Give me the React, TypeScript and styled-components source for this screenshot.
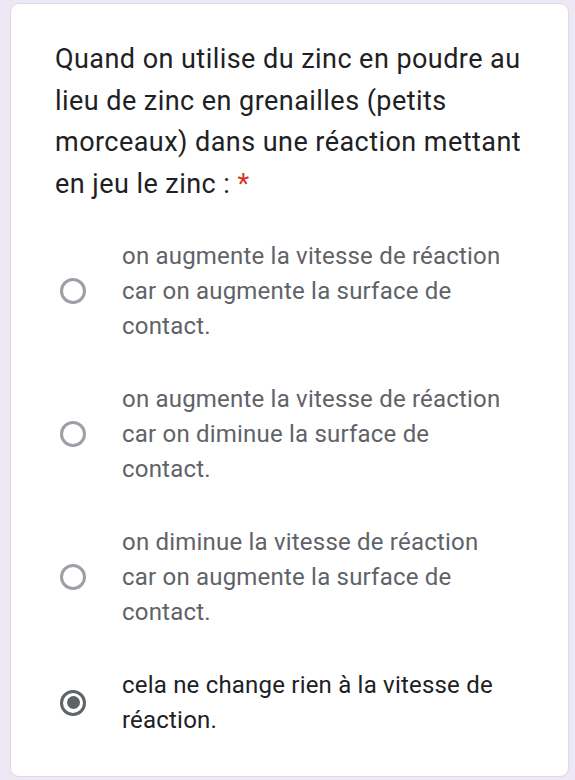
import React from "react";
import styled, { createGlobalStyle } from "styled-components";

const Global = createGlobalStyle`
  html, body {
    margin: 0;
    padding: 0;
    background: #ede7f6;
  }
  body {
    font-family: Roboto, "Liberation Sans", Arial, sans-serif;
  }
`;

const Page = styled.div`
  padding: 3px 6px 3px 10px;
`;

const Card = styled.div`
  box-sizing: border-box;
  height: 774px;
  background: #ffffff;
  border: 1px solid #dadce0;
  border-radius: 9px;
  padding: 35px 38px 0 44px;
`;

const Question = styled.div`
  font-size: 27px;
  line-height: 41.7px;
  color: #202124;
  letter-spacing: 0.45px;
`;

const Star = styled.span`
  color: #d93025;
`;

const Options = styled.div`
  display: flex;
  flex-direction: column;
  gap: 38px;
  margin-top: 33px;
`;

const Option = styled.label`
  display: flex;
  align-items: center;
  gap: 36px;
  padding-left: 5px;
`;

const Radio = styled.span<{ $checked?: boolean }>`
  box-sizing: border-box;
  flex: 0 0 auto;
  width: 26px;
  height: 26px;
  border-radius: 50%;
  border: 3px solid ${(p) => (p.$checked ? "#5f6368" : "#9aa0a6")};
  display: flex;
  align-items: center;
  justify-content: center;
  &::after {
    content: "";
    display: ${(p) => (p.$checked ? "block" : "none")};
    width: 13px;
    height: 13px;
    border-radius: 50%;
    background: #5f6368;
  }
`;

const OptionText = styled.span<{ $checked?: boolean }>`
  font-size: 24px;
  line-height: 35px;
  max-width: 390px;
  color: ${(p) => (p.$checked ? "#202124" : "#5f6368")};
  letter-spacing: 0.2px;
`;

const options = [
  "on augmente la vitesse de réaction car on augmente la surface de contact.",
  "on augmente la vitesse de réaction car on diminue la surface de contact.",
  "on diminue la vitesse de réaction car on augmente la surface de contact.",
  "cela ne change rien à la vitesse de réaction.",
];

export default function App() {
  const selected = 3;
  return (
    <>
      <Global />
      <Page>
        <Card>
          <Question>
            Quand on utilise du zinc en poudre au lieu de zinc en grenailles
            (petits morceaux) dans une réaction mettant en jeu le zinc :{" "}
            <Star>*</Star>
          </Question>
          <Options>
            {options.map((o, i) => (
              <Option key={i}>
                <Radio $checked={i === selected} />
                <OptionText $checked={i === selected}>{o}</OptionText>
              </Option>
            ))}
          </Options>
        </Card>
      </Page>
    </>
  );
}
